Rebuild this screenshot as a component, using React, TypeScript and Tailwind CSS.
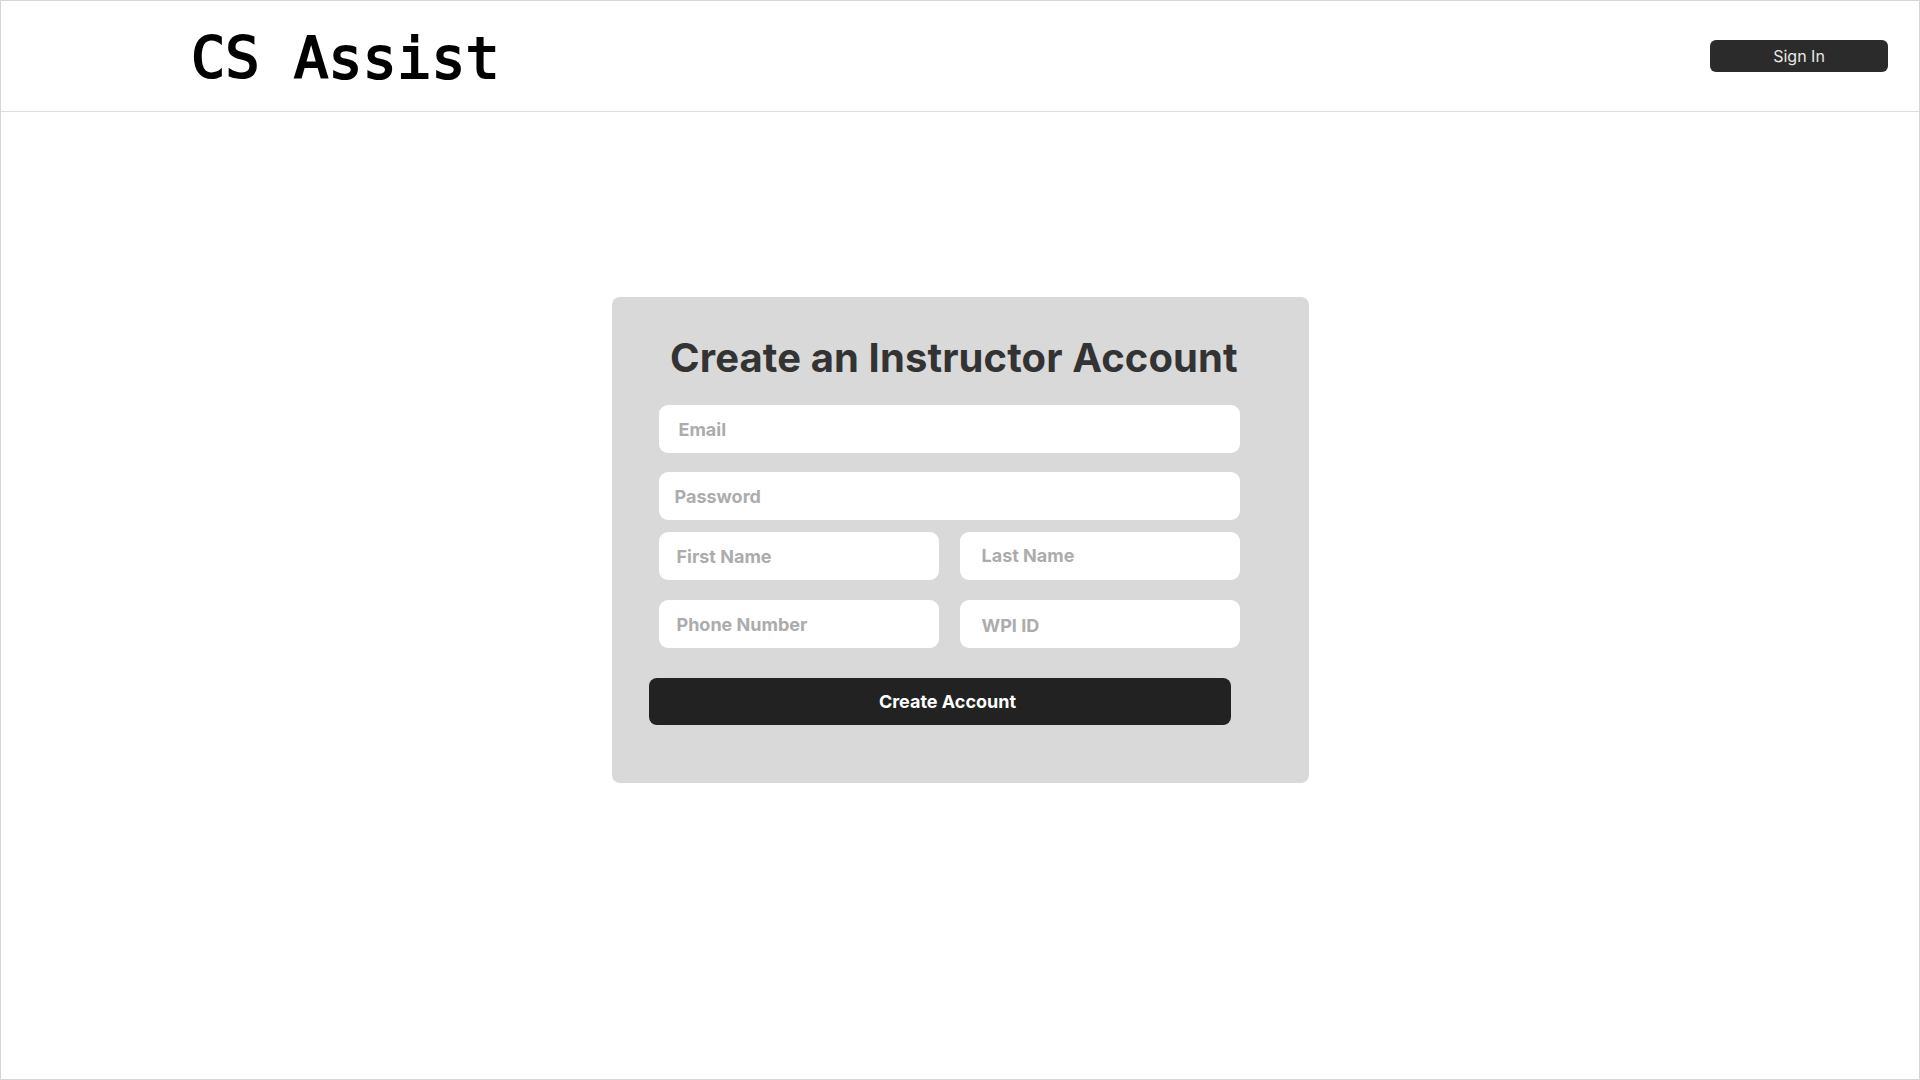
import React from 'react';

const inputBase =
  'h-[48px] rounded-[9px] bg-white outline-none text-[18px] text-[#333] placeholder:text-[#acacac] placeholder:font-bold font-bold';

function Field({ placeholder, className = '' }: { placeholder: string; className?: string }) {
  return <input type="text" placeholder={placeholder} className={`${inputBase} ${className}`} />;
}

export default function App() {
  return (
    <div
      className="w-full h-[1080px] flex flex-col border border-[#d6d6d6] bg-white overflow-hidden"
      style={{ fontFamily: 'Inter, "Noto Sans", sans-serif' }}
    >
      {/* Top bar */}
      <header className="h-[111px] shrink-0 flex items-start justify-between border-b border-[#dedede] pl-[190px] pr-[31px]">
        <h1
          className="mt-[29px] text-[57px] leading-[57px] font-normal text-black [-webkit-text-stroke:2px_black]"
          style={{ fontFamily: '"DejaVu Sans Mono", "Liberation Mono", monospace' }}
        >
          CS Assist
        </h1>
        <button className="mt-[39px] w-[178px] h-[32px] rounded-[6px] bg-[#2b2b2b] text-[#e8e8e8] text-[16px] font-normal">
          Sign In
        </button>
      </header>

      {/* Form */}
      <main className="flex-1 flex justify-center">
        <div className="mt-[185px] w-[697px] h-[486px] rounded-[8px] bg-[#d9d9d9] flex flex-col pt-[37px]">
          <h2 className="pr-[12px] text-center text-[40px] leading-[48px] font-bold text-[#333333] tracking-[0.1px]">
            Create an Instructor Account
          </h2>

          <div className="mt-[23px] pl-[47px] flex flex-col w-[628px]">
            <Field placeholder="Email" className="w-[581px] pl-[20px]" />
            <Field placeholder="Password" className="mt-[19px] w-[581px] pl-[16px]" />
            <div className="mt-[12px] flex gap-[21px]">
              <Field placeholder="First Name" className="w-[280px] pl-[18px]" />
              <Field placeholder="Last Name" className="w-[280px] pl-[22px] pb-[2px]" />
            </div>
            <div className="mt-[20px] flex gap-[21px]">
              <Field placeholder="Phone Number" className="w-[280px] pl-[18px]" />
              <Field placeholder="WPI ID" className="w-[280px] pl-[22px] pt-[3px]" />
            </div>
          </div>

          <button className="mt-[30px] ml-[37px] w-[582px] h-[47px] rounded-[8px] bg-[#222222] text-white text-[18px] font-bold pl-[16px]">
            Create Account
          </button>
        </div>
      </main>
    </div>
  );
}
